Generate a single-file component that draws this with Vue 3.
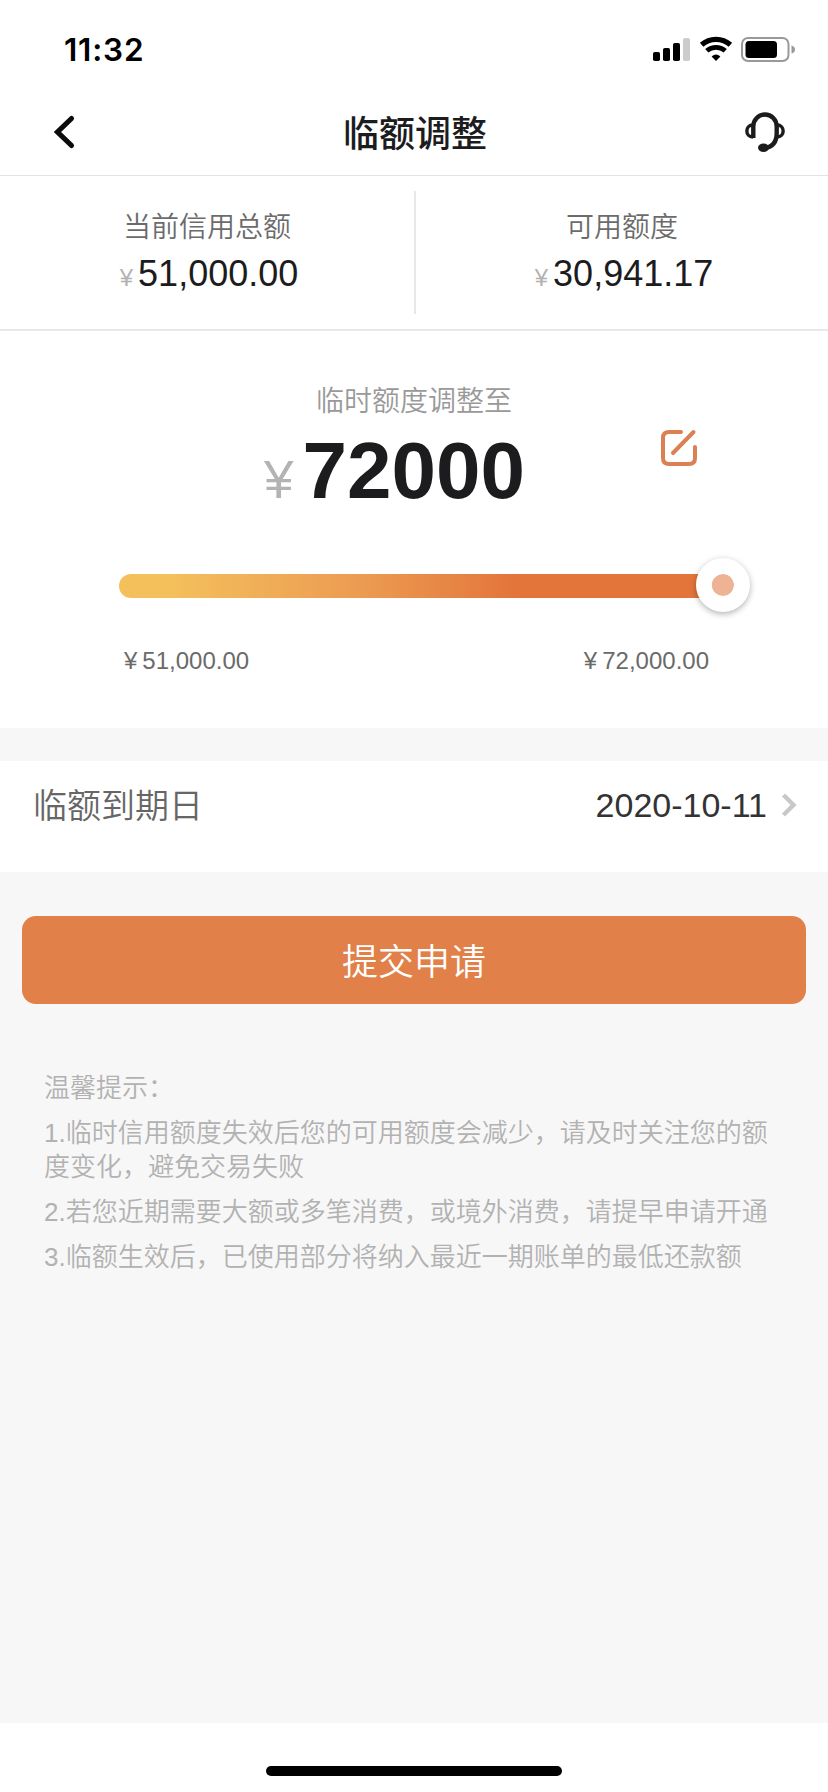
<script setup>
const summary = [
  { label: '当前信用总额', value: '51,000.00' },
  { label: '可用额度', value: '30,941.17' },
]
const tips = [
  '1.临时信用额度失效后您的可用额度会减少，请及时关注您的额度变化，避免交易失败',
  '2.若您近期需要大额或多笔消费，或境外消费，请提早申请开通',
  '3.临额生效后，已使用部分将纳入最近一期账单的最低还款额',
]
</script>

<template>
  <div class="page" lang="zh-CN">
    <div class="status">
      <span class="time">11:32</span>
      <svg class="status-icons" width="144" height="28" viewBox="0 0 144 28">
        <rect x="2" y="16" width="7" height="9" rx="1.8" />
        <rect x="12" y="12" width="7" height="13" rx="1.8" />
        <rect x="22" y="7" width="7" height="18" rx="1.8" />
        <rect x="32" y="2" width="7" height="23" rx="1.8" fill="#ccc" />
        <g fill="none" stroke="#000">
          <path d="M50.6 8.8A21.6 21.6 0 0 1 79.4 8.8" stroke-width="5.2" />
          <path d="M55.8 14.8A14 14 0 0 1 74.2 14.8" stroke-width="4.8" />
        </g>
        <path d="M65 25L60.6 20.4Q65 16.8 69.4 20.4Z" />
        <rect x="91" y="2" width="46.5" height="23" rx="6" fill="none" stroke="#999" stroke-width="2" />
        <rect x="94.5" y="5" width="31.5" height="17" rx="3.5" />
        <path d="M140.5 9.5Q144 10.5 144 13.5T140.5 17.5Z" fill="#999" />
      </svg>
    </div>

    <header class="nav">
      <svg class="back" width="24" height="36" viewBox="0 0 24 36">
        <path d="M19.5 4.5L5.5 18L19.5 31.5" fill="none" stroke="#0c0c0c" stroke-width="5.2" stroke-linecap="round" stroke-linejoin="miter" />
      </svg>
      <h1>临额调整</h1>
      <svg class="service" width="42" height="42" viewBox="0 0 42 42">
        <g fill="none" stroke="#1c1c1c">
          <path d="M9.3 27V15.5A11.7 12 0 0 1 32.7 15.5V22Q32.7 36 20 37" stroke-width="4.4" />
          <path d="M9 14C.8 14 .8 26 9 26" stroke-width="3.4" />
          <path d="M33 14C41.2 14 41.2 26 33 26" stroke-width="3.4" />
        </g>
        <ellipse cx="19.5" cy="36.8" rx="5.5" ry="4.2" fill="#1c1c1c" />
      </svg>
    </header>

    <section class="summary">
      <div v-for="s in summary" :key="s.label" class="cell">
        <div class="cell-label">{{ s.label }}</div>
        <div class="cell-value"><span class="yen">¥</span>{{ s.value }}</div>
      </div>
    </section>

    <section class="adjust">
      <div class="adjust-label">临时额度调整至</div>
      <div class="amount-row">
        <div class="amount"><span class="big-yen">¥</span>72000</div>
        <svg class="edit" width="38" height="38" viewBox="0 0 38 38">
          <g fill="none" stroke="#dc8053" stroke-width="4" stroke-linecap="round">
            <path d="M21 3H9Q3 3 3 9V29Q3 35 9 35H29Q35 35 35 29V18" />
            <path d="M13 24L33.5 3" />
          </g>
        </svg>
      </div>
      <div class="slider">
        <div class="track"></div>
        <div class="thumb"></div>
      </div>
      <div class="range">
        <span><i>¥</i>51,000.00</span>
        <span><i>¥</i>72,000.00</span>
      </div>
    </section>

    <section class="due">
      <span class="due-label">临额到期日</span>
      <span class="due-date">2020-10-11</span>
      <svg width="16" height="26" viewBox="0 0 16 26">
        <path d="M2.5 3L12.5 13L2.5 23" fill="none" stroke="#c8c8c8" stroke-width="4.4" />
      </svg>
    </section>

    <button class="submit">提交申请</button>

    <section class="tips">
      <p>温馨提示：</p>
      <p v-for="t in tips" :key="t">{{ t }}</p>
    </section>

    <footer class="home"><div class="bar"></div></footer>
  </div>
</template>

<style>
body {
  margin: 0;
}
</style>

<style scoped>
.page {
  width: 828px;
  height: 1792px;
  box-sizing: border-box;
  display: flex;
  flex-direction: column;
  overflow: hidden;
  background: #f7f7f7;
  font-family: "Liberation Sans", "Noto Sans CJK SC", sans-serif;
  font-weight: 350;
  color: #1c1c1e;
}
svg {
  display: block;
  flex: none;
}
.status {
  height: 88px;
  flex: none;
  display: flex;
  justify-content: space-between;
  padding: 0 33px 0 64px;
  background: #fff;
}
.time {
  margin-top: 30px;
  font: 600 31.5px/40px Inter, sans-serif;
  letter-spacing: 0.8px;
  color: #000;
}
.status-icons {
  margin-top: 36px;
}
.nav {
  height: 87px;
  flex: none;
  display: flex;
  justify-content: space-between;
  align-items: center;
  padding: 0 42px 0 52px;
  background: #fff;
  border-bottom: 1px solid #e2e2e2;
}
.back {
  margin-right: 10px;
}
h1 {
  margin: 7px 0 0;
  font-size: 36px;
  line-height: 52px;
  font-weight: 500;
}
.summary {
  height: 153px;
  flex: none;
  display: flex;
  align-items: center;
  background: #fff;
  border-bottom: 2px solid #e8e8e8;
}
.cell {
  flex: 1;
  height: 123px;
  box-sizing: border-box;
  padding: 17px 0 0;
  text-align: center;
}
.cell:first-child {
  border-right: 2px solid #e8e8e8;
  flex: 0 0 416px;
}
.cell-label {
  font-size: 28px;
  line-height: 40px;
  color: #6b6b6b;
}
.cell-value {
  margin: 2px 0 0 4px;
  font-size: 36px;
  line-height: 48px;
}
.yen {
  margin-right: 5px;
  font-size: 24px;
  color: #b2b2b2;
}
.adjust {
  height: 397px;
  flex: none;
  box-sizing: border-box;
  padding-top: 51px;
  background: #fff;
}
.adjust-label {
  font-size: 28px;
  line-height: 40px;
  text-align: center;
  color: #999;
}
.amount-row {
  height: 98px;
  display: flex;
  justify-content: space-between;
  padding: 0 130px 0 264px;
}
.amount {
  display: flex;
  align-items: baseline;
  font-size: 80px;
  line-height: 98px;
  font-weight: 700;
}
.big-yen {
  margin-right: 9px;
  font-size: 53px;
  font-weight: 400;
  color: #b3b3b3;
}
.edit {
  margin-top: 7px;
}
.slider {
  position: relative;
  height: 24px;
  margin: 54px 90px 0 119px;
}
.track {
  height: 24px;
  margin-right: 20px;
  border-radius: 12px;
  background: linear-gradient(90deg, #f4c05c 8%, #ec9c52 40%, #e3753b 66%);
}
.thumb {
  position: absolute;
  right: -12px;
  top: -16px;
  width: 22px;
  height: 22px;
  border: 16px solid #fff;
  border-radius: 50%;
  background: #eeb394;
  background-clip: padding-box;
  box-shadow: 0 2px 6px rgba(0, 0, 0, 0.3);
}
.range {
  display: flex;
  justify-content: space-between;
  margin-top: 47px;
  padding: 0 119px 0 124px;
  font-size: 24px;
  line-height: 32px;
  color: #6a6a6a;
}
.range i {
  margin-right: 5px;
  font-style: normal;
}
.due {
  height: 111px;
  flex: none;
  box-sizing: border-box;
  display: flex;
  align-items: flex-start;
  margin-top: 33px;
  padding: 19px 31px 0 33px;
  background: #fff;
  font-size: 34px;
  line-height: 50px;
}
.due-label {
  flex: 1;
  margin-top: 1px;
  color: #666;
}
.due-date {
  color: #333;
}
.due svg {
  margin: 12px 0 0 14px;
}
.submit {
  height: 88px;
  flex: none;
  margin: 44px 22px 0;
  padding: 5px 0 0;
  border: 0;
  border-radius: 14px;
  background: #e28049;
  color: #fff;
  font: 350 36px/83px "Liberation Sans", "Noto Sans CJK SC", sans-serif;
}
.tips {
  flex: 1;
  padding: 67px 44px 0;
  font-size: 26px;
  line-height: 34px;
  color: #b2b2b2;
}
.tips p {
  margin: 0 0 11px;
}
.home {
  height: 69px;
  flex: none;
  box-sizing: border-box;
  padding-top: 43px;
  background: #fff;
}
.bar {
  width: 296px;
  height: 10px;
  margin: 0 auto;
  border-radius: 5px;
  background: #000;
}
</style>
